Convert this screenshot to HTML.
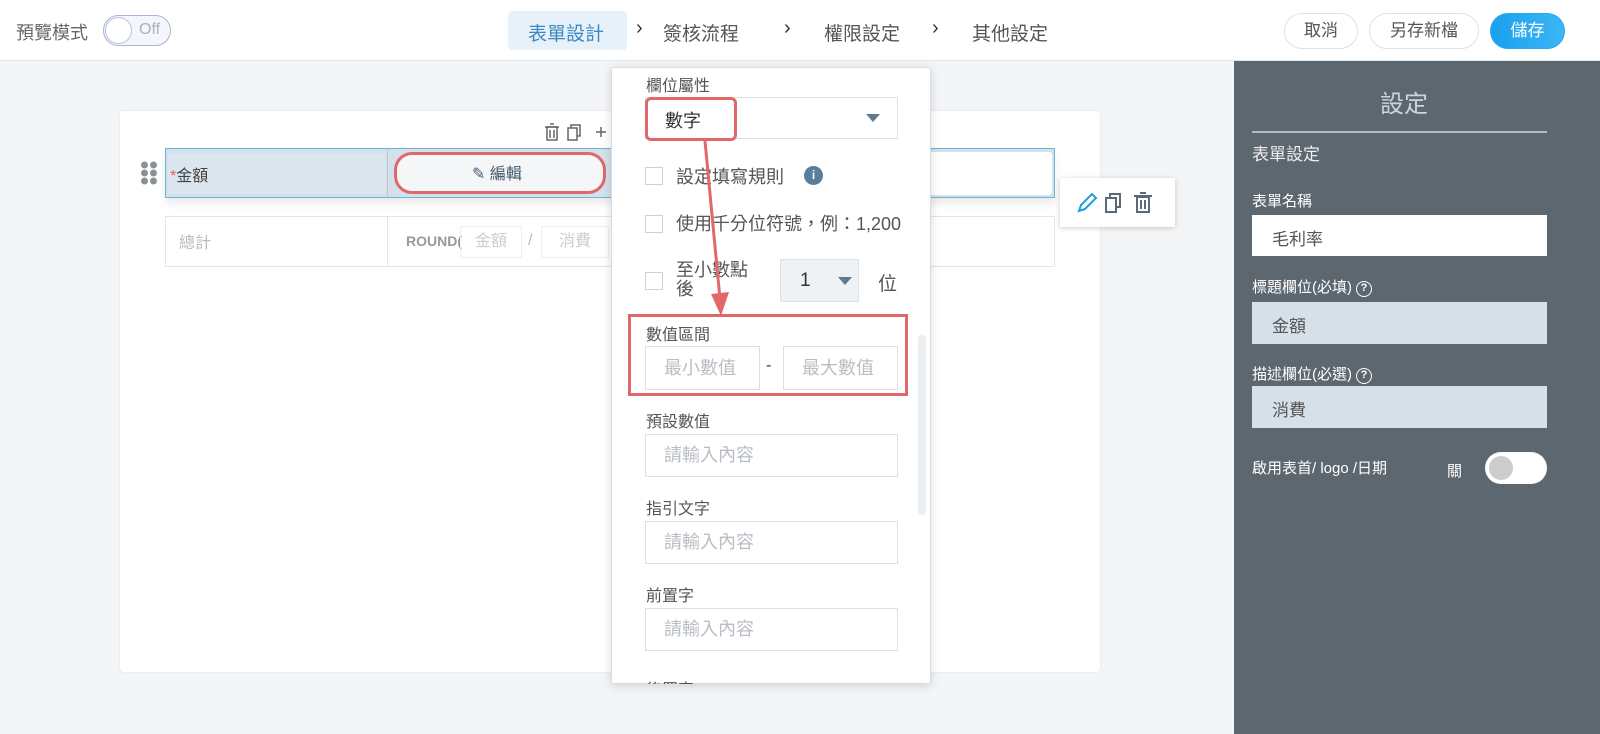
<!DOCTYPE html>
<html><head><meta charset="utf-8"><style>
*{box-sizing:border-box;margin:0;padding:0}
body{width:1600px;height:734px;overflow:hidden;background:#f3f5f7;font-family:"Liberation Sans","Noto Sans CJK TC",sans-serif;position:relative;color:#555}
.a{position:absolute}
.top{left:0;top:0;width:1600px;height:61px;background:#fff;border-bottom:1px solid #e3e6ea}
.btn{position:absolute;top:13px;height:36px;border:1px solid #dde2e6;border-radius:18px;background:#fff;font-size:17px;color:#555;text-align:center;line-height:34px}
.inp{position:absolute;border:1px solid #dcdfe3;background:#fff;font-size:18px;color:#b8bec4;padding-left:18px}
.cb{position:absolute;width:18px;height:18px;border:1px solid #cfd3d7;background:#fff;left:645px}
.lbl{position:absolute;font-size:16px;color:#555;line-height:18px}
.rp{font-size:16px;color:#fff;position:absolute;left:1252px;line-height:18px}
.q{display:inline-block;width:16px;height:16px;border:1.5px solid #fff;border-radius:50%;font-size:11px;text-align:center;line-height:13px;font-weight:bold;vertical-align:1px;margin-left:4px}
</style></head><body>
<div class="a top"></div>
<div class="a" style="left:16px;top:19px;font-size:18px;color:#666">預覽模式</div>
<div class="a" style="left:103px;top:15px;width:68px;height:31px;border:1px solid #a9b4d8;border-radius:16px;background:#f4f6fc"><div class="a" style="left:1px;top:1px;width:27px;height:27px;border-radius:50%;background:#fff;border:1px solid #b7c0dd"></div><span class="a" style="left:35px;top:5px;font-size:16px;color:#a9b0c2">Off</span></div>
<div class="a" style="left:508px;top:11px;width:119px;height:39px;background:#e6f1fa;border-radius:4px"></div>
<div class="a" style="left:528px;top:19px;font-size:19px;color:#3e88c0">表單設計</div>
<div class="a" style="left:636px;top:17px;font-size:20px;color:#333">›</div>
<div class="a" style="left:663px;top:19px;font-size:19px;color:#555">簽核流程</div>
<div class="a" style="left:784px;top:17px;font-size:20px;color:#333">›</div>
<div class="a" style="left:824px;top:19px;font-size:19px;color:#555">權限設定</div>
<div class="a" style="left:932px;top:17px;font-size:20px;color:#333">›</div>
<div class="a" style="left:972px;top:19px;font-size:19px;color:#555">其他設定</div>
<div class="btn" style="left:1284px;width:74px">取消</div>
<div class="btn" style="left:1369px;width:110px">另存新檔</div>
<div class="btn" style="left:1490px;width:75px;background:linear-gradient(90deg,#1aa0ee,#3cb6f4);border-color:#2aa8f0;color:#fff">儲存</div>

<div class="a" style="left:120px;top:111px;width:980px;height:561px;background:#fff;border-radius:4px;box-shadow:0 0 2px #dfe3e7"></div>
<svg class="a" style="left:544px;top:123px" width="62" height="18"><g fill="none" stroke="#666" stroke-width="1.5"><rect x="3" y="4" width="10" height="13"/><path d="M1 4h14M6 1h4M6 7v8M10 7v8"/><rect x="24" y="5" width="9" height="12"/><path d="M27 5V2h9v11h-3"/><path d="M52 9h10M57 4v10"/></g></svg>
<div class="a" style="left:140px;top:161px;width:18px;height:24px;background:radial-gradient(circle,#8a9196 3.2px,transparent 3.7px) 0 0/9px 8px"></div>
<div class="a" style="left:165px;top:148px;width:890px;height:50px;border:1px solid #6ab6d6;background:#d5e1ea;box-shadow:0 6px 8px rgba(0,0,0,.08)"></div>
<div class="a" style="left:168px;top:154px;width:218px;height:40px;background:#dce6ee"></div>
<div class="a" style="left:387px;top:149px;width:1px;height:48px;background:#b9c9d5"></div>
<div class="a" style="left:170px;top:162px;font-size:16px;color:#444"><span style="color:#e06060">*</span>金額</div>
<div class="a" style="left:394px;top:152px;width:212px;height:42px;background:#f4f6f8;border-radius:18px;border:3px solid #e0686b"></div>
<div class="a" style="left:472px;top:160px;font-size:16px;color:#44596b">✎ 編輯</div>
<div class="a" style="left:925px;top:152px;width:127px;height:43px;background:#fff;border-radius:3px"></div>
<div class="a" style="left:165px;top:216px;width:890px;height:51px;border:1px solid #e3e6e9;background:#fff"></div>
<div class="a" style="left:387px;top:217px;width:1px;height:49px;background:#e3e6e9"></div>
<div class="a" style="left:179px;top:229px;font-size:16px;color:#bbb">總計</div>
<div class="a" style="left:406px;top:233px;font-size:14px;color:#999;font-weight:bold">ROUND(</div>
<div class="a" style="left:460px;top:226px;width:62px;height:32px;border:1px solid #eceff1;font-size:16px;color:#ccc;text-align:center;line-height:30px">金額</div>
<div class="a" style="left:528px;top:232px;color:#bbb">/</div>
<div class="a" style="left:541px;top:226px;width:68px;height:32px;border:1px solid #eceff1;font-size:16px;color:#ccc;text-align:center;line-height:30px">消費</div>

<div class="a" style="left:1060px;top:178px;width:115px;height:49px;background:#fff;box-shadow:0 1px 5px rgba(0,0,0,.2)"></div>
<svg class="a" style="left:1075px;top:191px" width="85" height="24"><g fill="none" stroke-width="2"><path d="M4 20l2-6L17 3l4 4L10 18z" stroke="#1c9ee0"/><g stroke="#5a6a78"><rect x="31" y="7" width="10" height="14"/><path d="M35 7V3h10v13h-4"/><rect x="62" y="6" width="12" height="15"/><path d="M59 5h18M65 2h6M66 9v9M70 9v9"/></g></g></svg>

<div class="a" style="left:611px;top:67px;width:320px;height:617px;background:#fff;border:1px solid #d8dde2;border-radius:3px;box-shadow:0 2px 10px rgba(0,0,0,.15)"></div>
<div class="lbl" style="left:646px;top:78px">欄位屬性</div>
<div class="inp" style="left:645px;top:97px;width:253px;height:42px"></div>
<div class="a" style="left:866px;top:114px;border:7px solid transparent;border-top:8px solid #5b7a93;border-bottom:0"></div>
<div class="a" style="left:645px;top:97px;width:92px;height:44px;border:3px solid #e0686b;border-radius:6px"></div>
<div class="a" style="left:665px;top:107px;font-size:18px;color:#333">數字</div>
<div class="cb" style="top:167px"></div><div class="a" style="left:676px;top:163px;font-size:18px;color:#555">設定填寫規則</div>
<div class="a" style="left:804px;top:166px;width:19px;height:19px;border-radius:50%;background:#5a7d99;color:#fff;font-size:12px;text-align:center;line-height:19px;font-weight:bold">i</div>
<div class="cb" style="top:215px"></div><div class="a" style="left:676px;top:210px;font-size:18px;color:#555">使用千分位符號，例：1,200</div>
<div class="cb" style="top:272px"></div><div class="a" style="left:676px;top:261px;font-size:18px;color:#555;line-height:19px">至小數點<br>後</div>
<div class="a" style="left:780px;top:259px;width:79px;height:43px;background:#eef2f5;border:1px solid #dbe1e6;font-size:19px;color:#333;padding:10px 0 0 19px">1</div>
<div class="a" style="left:838px;top:277px;border:7px solid transparent;border-top:8px solid #5b7a93;border-bottom:0"></div>
<div class="a" style="left:878px;top:269px;font-size:19px;color:#555">位</div>
<div class="a" style="left:918px;top:335px;width:8px;height:180px;background:#eceff1;border-radius:4px"></div>
<div class="lbl" style="left:646px;top:327px">數值區間</div>
<div class="inp" style="left:645px;top:346px;width:115px;height:44px;line-height:42px">最小數值</div>
<div class="a" style="left:766px;top:357px;color:#333">-</div>
<div class="inp" style="left:783px;top:346px;width:115px;height:44px;line-height:42px">最大數值</div>
<div class="a" style="left:628px;top:314px;width:280px;height:82px;border:3px solid #e0686b"></div>
<svg class="a" style="left:690px;top:139px" width="50" height="180"><path d="M15 2L30 160" stroke="#e0686b" stroke-width="3"/><path d="M21 155l10 22 8-24z" fill="#e0686b"/></svg>
<div class="lbl" style="left:646px;top:414px">預設數值</div>
<div class="inp" style="left:645px;top:434px;width:253px;height:43px;line-height:41px">請輸入內容</div>
<div class="lbl" style="left:646px;top:501px">指引文字</div>
<div class="inp" style="left:645px;top:521px;width:253px;height:43px;line-height:41px">請輸入內容</div>
<div class="lbl" style="left:646px;top:588px">前置字</div>
<div class="inp" style="left:645px;top:608px;width:253px;height:43px;line-height:41px">請輸入內容</div>
<div class="a" style="left:646px;top:676px;width:60px;height:8px;overflow:hidden"><div style="font-size:16px;color:#555">後置字</div></div>

<div class="a" style="left:1234px;top:61px;width:366px;height:673px;background:#5d676f"></div>
<div class="a" style="left:1380px;top:84px;font-size:24px;color:#c9d5e0">設定</div>
<div class="a" style="left:1252px;top:131px;width:295px;height:2px;background:#a9bccb"></div>
<div class="rp" style="top:146px;font-size:17px;color:#eee">表單設定</div>
<div class="rp" style="top:193px;font-size:15px">表單名稱</div>
<div class="a" style="left:1252px;top:215px;width:295px;height:41px;background:#fff;font-size:17px;color:#555;padding:10px 0 0 20px">毛利率</div>
<div class="rp" style="top:279px;font-size:15px">標題欄位(必填)<span class="q">?</span></div>
<div class="a" style="left:1252px;top:302px;width:295px;height:42px;background:#d6e0e8;font-size:17px;color:#555;padding:10px 0 0 20px">金額</div>
<div class="rp" style="top:366px;font-size:15px">描述欄位(必選)<span class="q">?</span></div>
<div class="a" style="left:1252px;top:386px;width:295px;height:42px;background:#d6e0e8;font-size:17px;color:#555;padding:10px 0 0 20px">消費</div>
<div class="rp" style="top:460px;font-size:15px">啟用表首/ logo /日期</div>
<div class="a" style="left:1447px;top:460px;font-size:15px;color:#fff">關</div>
<div class="a" style="left:1485px;top:452px;width:62px;height:32px;background:#fff;border-radius:16px"><div class="a" style="left:4px;top:4px;width:24px;height:24px;border-radius:50%;background:#ccc"></div></div>
</body></html>
